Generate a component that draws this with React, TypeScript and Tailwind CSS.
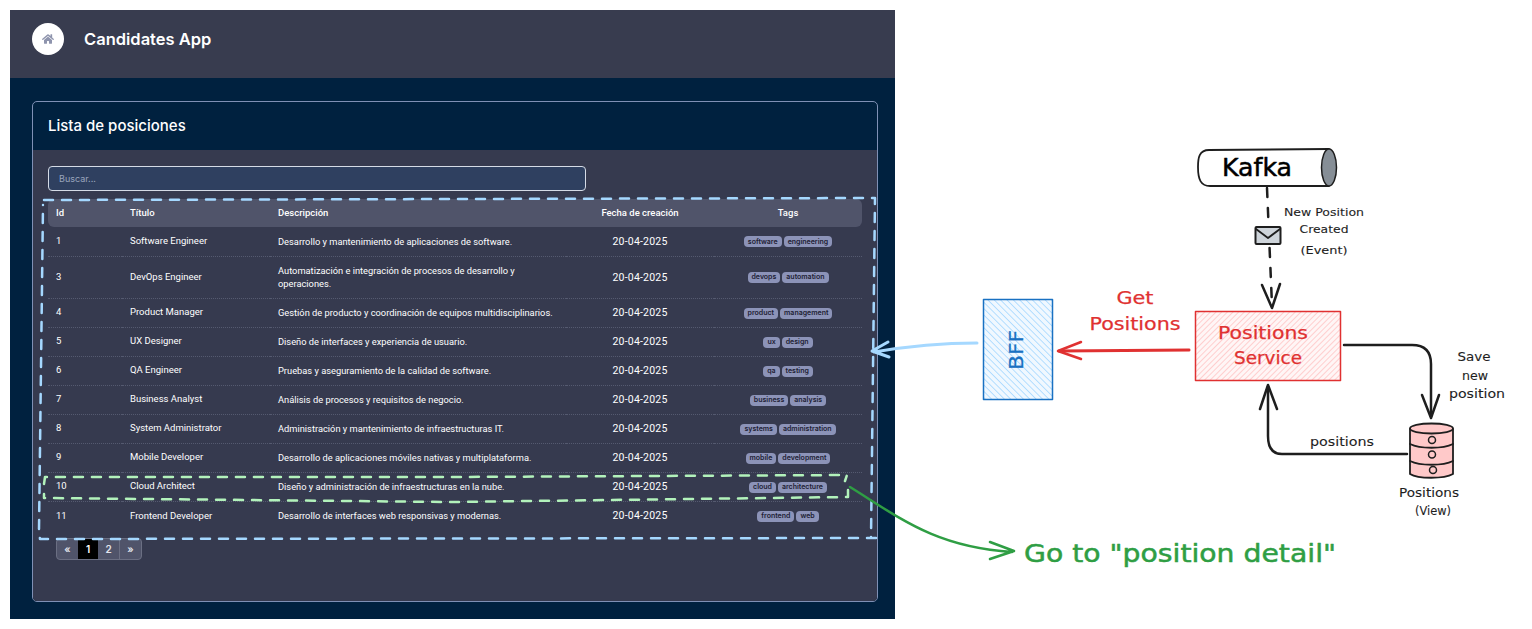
import { FaHome } from 'react-icons/fa';

const positions = [
  { id: 1, title: 'Software Engineer', desc: 'Desarrollo y mantenimiento de aplicaciones de software.', tags: ['software', 'engineering'] },
  { id: 3, title: 'DevOps Engineer', desc: 'Automatización e integración de procesos de desarrollo y operaciones.', tags: ['devops', 'automation'] },
  { id: 4, title: 'Product Manager', desc: 'Gestión de producto y coordinación de equipos multidisciplinarios.', tags: ['product', 'management'] },
  { id: 5, title: 'UX Designer', desc: 'Diseño de interfaces y experiencia de usuario.', tags: ['ux', 'design'] },
  { id: 6, title: 'QA Engineer', desc: 'Pruebas y aseguramiento de la calidad de software.', tags: ['qa', 'testing'] },
  { id: 7, title: 'Business Analyst', desc: 'Análisis de procesos y requisitos de negocio.', tags: ['business', 'analysis'] },
  { id: 8, title: 'System Administrator', desc: 'Administración y mantenimiento de infraestructuras IT.', tags: ['systems', 'administration'] },
  { id: 9, title: 'Mobile Developer', desc: 'Desarrollo de aplicaciones móviles nativas y multiplataforma.', tags: ['mobile', 'development'] },
  { id: 10, title: 'Cloud Architect', desc: 'Diseño y administración de infraestructuras en la nube.', tags: ['cloud', 'architecture'] },
  { id: 11, title: 'Frontend Developer', desc: 'Desarrollo de interfaces web responsivas y modernas.', tags: ['frontend', 'web'] },
];

const sketchFont = "'DejaVu Sans', 'Noto Sans', sans-serif";

const Label = ({ x, y, size, width, fill = '#1e1e1e', bold = 0.1, children }: { x: number; y: number; size: number; width: number; fill?: string; bold?: number; children: string }) => (
  <text x={x} y={y} fontSize={size} fill={fill} stroke={fill} strokeWidth={bold} fontFamily={sketchFont} textAnchor="middle" textLength={width} lengthAdjust="spacingAndGlyphs">
    {children}
  </text>
);

const Diagram = () => (
  <svg className="absolute inset-0 pointer-events-none" width="1532" height="629" viewBox="0 0 1532 629" fill="none" strokeLinecap="round" strokeLinejoin="round">
    <defs>
      <pattern id="hatchRed" width="4" height="4" patternUnits="userSpaceOnUse" patternTransform="rotate(45)">
        <rect width="4" height="4" fill="#fff6f6" />
        <line x1="0" y1="0" x2="0" y2="4" stroke="#ffb3b3" strokeWidth="1.2" />
      </pattern>
      <pattern id="hatchBlue" width="4.5" height="4.5" patternUnits="userSpaceOnUse" patternTransform="rotate(-45)">
        <rect width="4.5" height="4.5" fill="#f0f8ff" />
        <line x1="0" y1="0" x2="0" y2="4.5" stroke="#a5d8ff" strokeWidth="1.6" />
      </pattern>
    </defs>

    {/* selection outlines over the table */}
    <path d="M44 200 L875 198 L871 538 M876 538 L40 539 L39 530 L43 205" stroke="#a5d8ff" strokeWidth="2.5" strokeDasharray="9 9" />
    <path d="M44 484 L45 477 L450 477 L847 475 L845 481 M848 490 L848 497 L450 502 L44 498 L44 494" stroke="#b2f2bb" strokeWidth="2.5" strokeDasharray="9 9" />

    {/* go to detail */}
    <path d="M850 487 C 900 518, 935 547, 1012 552 M990 542 L1014 551 L990 559" stroke="#2f9e44" strokeWidth="2.5" />
    <Label x={1180} y={562} size={25} width={312} fill="#2f9e44" bold={0.5}>Go to "position detail"</Label>

    {/* kafka */}
    <path d="M1329 149 L1209 150 C1199 150 1198 158 1198 167 C1198 180 1201 186 1210 186 L1329 186" fill="#fff" stroke="#1e1e1e" strokeWidth="1.800" />
    <ellipse cx="1329" cy="167.500" rx="7.500" ry="18.500" fill="#868e96" stroke="#1e1e1e" strokeWidth="1.500" />
    <Label x={1257} y={176} size={24} width={70} fill="#000" bold={0.5}>Kafka</Label>

    <path d="M1267 188 L1272 305" stroke="#1e1e1e" strokeWidth="2.500" strokeDasharray="9 11" />
    <path d="M1262 285 L1272 308 L1280 284" stroke="#1e1e1e" strokeWidth="2.500" />
    <rect x="1255.500" y="227" width="25" height="17" rx="1" fill="#ced4da" stroke="#1e1e1e" strokeWidth="2" />
    <path d="M1256 229 L1268 238 L1280 229" stroke="#1e1e1e" strokeWidth="1.800" />
    <Label x={1324} y={216} size={11} width={80}>New Position</Label>
    <Label x={1324} y={233} size={11} width={49}>Created</Label>
    <Label x={1324} y={254} size={11} width={47}>(Event)</Label>

    {/* positions service */}
    <rect x="1195.500" y="311.500" width="145" height="69" fill="url(#hatchRed)" stroke="#e03131" strokeWidth="1.500" />
    <Label x={1263} y={339} size={18} width={90} fill="#e03131" bold={0.25}>Positions</Label>
    <Label x={1268} y={364} size={18} width={68} fill="#e03131" bold={0.25}>Service</Label>

    {/* bff */}
    <rect x="983.500" y="299.500" width="69" height="100" fill="url(#hatchBlue)" stroke="#1971c2" strokeWidth="1.500" />
    <g transform="rotate(-90 1016 350)">
      <Label x={1016} y={357} size={20} width={40} fill="#1971c2" bold={0.25}>BFF</Label>
    </g>

    {/* get positions */}
    <path d="M1189 350 L1059 351" stroke="#e03131" strokeWidth="3" />
    <path d="M1081 342 L1058 351 L1081 359" stroke="#e03131" strokeWidth="2.500" />
    <Label x={1135} y={304} size={18} width={37} fill="#e03131" bold={0.25}>Get</Label>
    <Label x={1135} y={330} size={18} width={91} fill="#e03131" bold={0.25}>Positions</Label>

    <path d="M977 343 C 945 343, 915 345, 874 352 M888 342 L872 351 L889 357" stroke="#a5d8ff" strokeWidth="3" />

    {/* save new position */}
    <path d="M1344 345 L1412 345 C1425 345 1431 352 1431 364 L1431 416" stroke="#1e1e1e" strokeWidth="2.500" />
    <path d="M1422 395 L1431 418 L1439 395" stroke="#1e1e1e" strokeWidth="2.500" />
    <Label x={1474} y={361} size={12} width={33}>Save</Label>
    <Label x={1475} y={380} size={12} width={26}>new</Label>
    <Label x={1477} y={398} size={12} width={56}>position</Label>

    {/* positions view */}
    <path d="M1410 429 L1410 474 C1418 479 1444 479 1453 474 L1453 429" fill="#ffc9c9" stroke="#1e1e1e" strokeWidth="1.800" />
    <ellipse cx="1431.500" cy="428.500" rx="21.500" ry="5" fill="#ffc9c9" stroke="#1e1e1e" strokeWidth="1.800" />
    <path d="M1410 444 C1420 449 1443 449 1453 444 M1410 461 C1420 466 1443 466 1453 461" stroke="#1e1e1e" strokeWidth="1.800" />
    <circle cx="1432" cy="440" r="3.500" stroke="#1e1e1e" strokeWidth="1.500" />
    <circle cx="1432" cy="454.500" r="3.500" stroke="#1e1e1e" strokeWidth="1.500" />
    <circle cx="1433" cy="470" r="3.500" stroke="#1e1e1e" strokeWidth="1.500" />
    <path d="M1407 454 L1282 454 C1272 454 1268 447 1268 436 L1268 387" stroke="#1e1e1e" strokeWidth="2.500" />
    <path d="M1260 409 L1268 385 L1277 409" stroke="#1e1e1e" strokeWidth="2.500" />
    <Label x={1342} y={446} size={13} width={64}>positions</Label>
    <Label x={1429} y={497} size={12} width={60}>Positions</Label>
    <Label x={1433} y={515} size={12} width={36}>(View)</Label>
  </svg>
);

const App = () => (
  <div className="relative w-[1532px] h-[629px] overflow-hidden bg-white font-['Inter',sans-serif]">
    <div className="ml-[10px] mt-[10px] w-[885px] h-[609px] inline-flex flex-col bg-[#00213f] align-top">
      <header className="h-[68px] shrink-0 flex items-center gap-5 px-[22px] pb-[10px] bg-[#383c4f]">
        <div className="w-8 h-8 rounded-full bg-white flex items-center justify-center">
          <FaHome className="w-3 h-3 text-[#8e94ad]" />
        </div>
        <h1 className="text-[16.5px] font-semibold text-white">Candidates App</h1>
      </header>

      <main className="ml-[22px] mr-[17px] mt-[23px] h-[501px] flex flex-col rounded-[5px] border border-[#7f90b5] overflow-hidden">
        <div className="h-[48px] shrink-0 flex items-center px-[15px] pt-px text-[15px] font-medium text-white">Lista de posiciones</div>
        <div className="flex-1 bg-[#363a4f] px-[15px] pt-4">
          <div className="w-[538px] h-[25px] flex items-center px-[10px] rounded-[4px] border border-[#d5dbe6] bg-[#2f4060] text-[9px] text-[#9aa5bd]">Buscar...</div>

          <table className="mt-2 w-[814px] table-fixed border-collapse font-['Roboto',sans-serif] text-[9.5px] text-white">
            <colgroup>
              <col className="w-[74px]" />
              <col className="w-[148px]" />
              <col className="w-[296px]" />
              <col className="w-[148px]" />
              <col className="w-[148px]" />
            </colgroup>
            <thead>
              <tr className="h-[28px] bg-[#50546a] text-left">
                <th className="pl-2 font-medium rounded-l-md">Id</th>
                <th className="pl-2 font-medium">Título</th>
                <th className="pl-2 font-medium">Descripción</th>
                <th className="font-medium text-center">Fecha de creación</th>
                <th className="font-medium text-center rounded-r-md">Tags</th>
              </tr>
            </thead>
            <tbody>
              {positions.map(p => (
                <tr key={p.id} className={`${p.id === 3 ? 'h-[42px]' : 'h-[29px]'} border-b border-dotted border-[#555a70] last:border-b-0`}>
                  <td className="pl-2">{p.id}</td>
                  <td className="pl-2">{p.title}</td>
                  <td className="pl-2 pr-1 text-[9.3px] leading-[13px]">{p.desc}</td>
                  <td className="pt-px text-center text-[10.5px] tracking-[0.02em]">20-04-2025</td>
                  <td>
                    <div className="mt-px flex justify-center gap-0.5 font-['Inter',sans-serif]">
                      {p.tags.map(tag => (
                        <span key={tag} className="h-[11px] flex items-center px-[4px] rounded-[4px] bg-[#8c93b8] text-[7px] font-semibold text-[#1d2033]">
                          {tag}
                        </span>
                      ))}
                    </div>
                  </td>
                </tr>
              ))}
            </tbody>
          </table>

          <div className="mt-2 ml-2 w-[86px] h-[22px] flex rounded-[4px] border border-[#6b6f83] bg-[#50546a] overflow-hidden text-[10px] font-semibold text-[#e4e6ee]">
            <div className="w-[21px] flex items-center justify-center">«</div>
            <div className="w-[20px] flex items-center justify-center bg-black text-white">1</div>
            <div className="w-[22px] flex items-center justify-center border-r border-[#6b6f83]">2</div>
            <div className="flex-1 flex items-center justify-center">»</div>
          </div>
        </div>
      </main>
    </div>
    <Diagram />
  </div>
);

export default App;
